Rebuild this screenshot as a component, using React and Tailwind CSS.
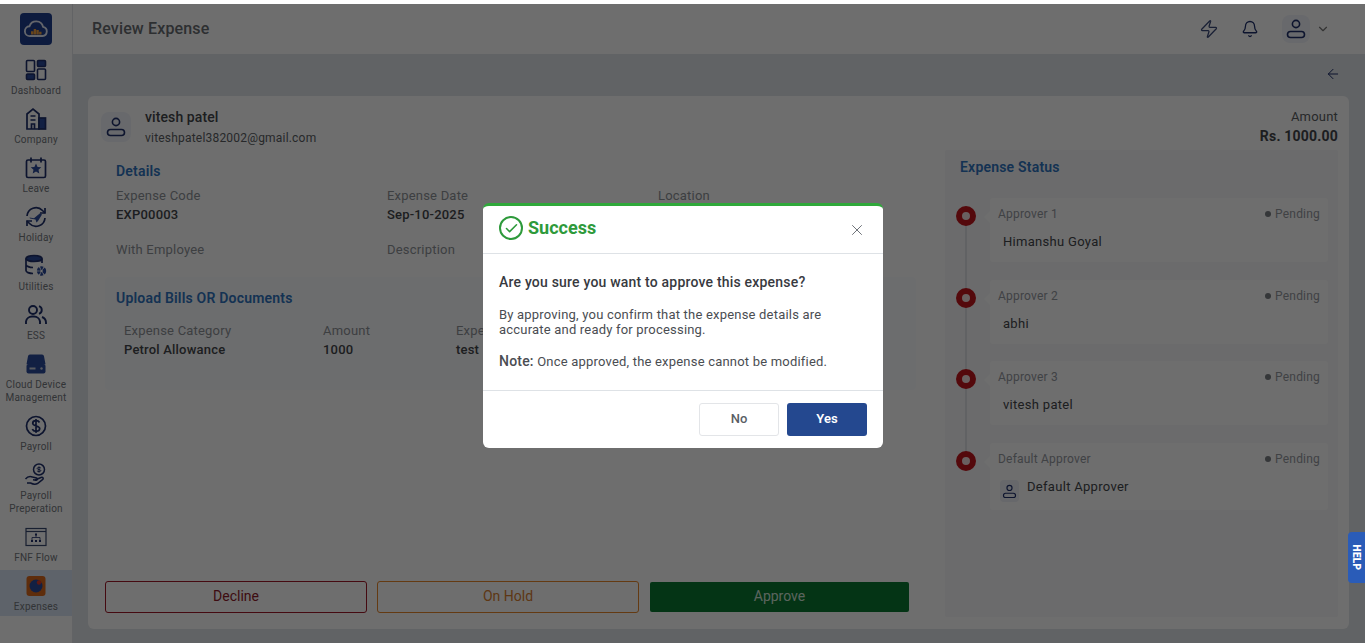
import { ArrowLeft, Bell, ChevronDown, Check, X, Zap } from 'lucide-react';

const font = { fontFamily: 'Roboto, "Liberation Sans", sans-serif' };

// Outline person used in the header, the card top and the default approver row
function Person({ size = 24, color = '#1e2f6b' }) {
  return (
    <svg width={size} height={size} viewBox="0 0 24 24" fill="none" stroke={color} strokeWidth="1.6">
      <circle cx="12" cy="7" r="3.6" />
      <rect x="3.5" y="14.5" width="17" height="6" rx="3" />
    </svg>
  );
}

const c = '#1e2f6b';
const b = '#2b4a9b';

const icons = {
  dashboard: (
    <svg width="24" height="24" viewBox="0 0 24 24" fill="none" stroke={c} strokeWidth="1.6">
      <rect x="2.5" y="2.5" width="8" height="11" rx="1" />
      <rect x="13.5" y="2.5" width="8" height="6" rx="1" fill={b} />
      <rect x="2.5" y="16" width="8" height="5.5" rx="1" fill={b} />
      <rect x="13.5" y="11" width="8" height="10.5" rx="1" />
    </svg>
  ),
  company: (
    <svg width="24" height="24" viewBox="0 0 24 24" fill="none" stroke={c} strokeWidth="1.7">
      <path d="M3 22V7l6-5 6 5v15z" />
      <rect x="15" y="11" width="6.5" height="11" fill={b} />
      <path d="M6.500 9h5M6.500 13h5M7.500 22v-5h3v5" />
    </svg>
  ),
  leave: (
    <svg width="24" height="24" viewBox="0 0 24 24" fill="none" stroke={c} strokeWidth="1.7">
      <rect x="2.5" y="4" width="19" height="17.5" rx="1.5" />
      <path d="M7 1.500v5M17 1.500v5" />
      <path d="M12 7.500l1.600 3.400 3.700.4-2.800 2.500.8 3.700-3.300-1.900-3.300 1.900.8-3.700-2.800-2.500 3.700-.4z" fill={b} stroke="none" />
    </svg>
  ),
  holiday: (
    <svg width="24" height="24" viewBox="0 0 24 24" fill="none" stroke={c} strokeWidth="1.7">
      <path d="M3 11a9 9 0 0 1 15.500-5.500L21 8" />
      <path d="M21 3v5h-5" />
      <path d="M21 13a9 9 0 0 1-15.500 5.500L3 16" />
      <path d="M3 21v-5h5" />
      <path d="M5.500 12.500l4.500.8 6-5 2 1.200-4 6.500-1.500 1.500-1-3-5.500-1z" fill={b} stroke="none" />
    </svg>
  ),
  utilities: (
    <svg width="24" height="24" viewBox="0 0 24 24" fill="none" stroke={c} strokeWidth="1.7">
      <ellipse cx="10" cy="4.500" rx="8" ry="3" fill={b} />
      <path d="M2 4.500v12c0 1.600 3 3 7 3M18 4.500V9M2 10.500c0 1.600 3.500 3 7 3" />
      <circle cx="17.500" cy="17" r="3" stroke={b} strokeWidth="3.400" strokeDasharray="2.400 0.800" />
    </svg>
  ),
  ess: (
    <svg width="24" height="24" viewBox="0 0 24 24" fill="none" stroke={c} strokeWidth="1.900">
      <circle cx="9" cy="7" r="4" />
      <path d="M2 21v-2.500a6 6 0 0 1 6-5h2a6 6 0 0 1 6 5V21" />
      <path d="M15 3.200a4 4 0 0 1 0 7.600M18 14a6 6 0 0 1 4 5.500V21" />
    </svg>
  ),
  device: (
    <svg width="24" height="24" viewBox="0 0 24 24" fill="none">
      <path d="M6 2.500h12a2 2 0 0 1 2 1.700l1.500 8H2.500L4 4.200a2 2 0 0 1 2-1.700z" fill={b} />
      <rect x="2.500" y="12" width="19" height="9.500" rx="2" fill={b} />
      <rect x="5.500" y="15.500" width="6" height="2" fill="#c9cfdd" />
      <circle cx="17.500" cy="16.500" r="1.200" fill="#c9cfdd" />
    </svg>
  ),
  payroll: (
    <svg width="24" height="24" viewBox="0 0 24 24" fill="none" stroke={c} strokeWidth="1.700">
      <circle cx="12" cy="12" r="9.500" />
      <path d="M15.500 8.500c-.6-1.200-2-1.800-3.500-1.800-1.900 0-3.300 1-3.300 2.600 0 3.500 7 1.800 7 5.300 0 1.600-1.500 2.700-3.600 2.700-1.700 0-3.200-.8-3.800-2.100M12 5v14" />
    </svg>
  ),
  prep: (
    <svg width="24" height="24" viewBox="0 0 24 24" fill="none" stroke={c} strokeWidth="1.500">
      <circle cx="15" cy="6.500" r="5.500" />
      <path d="M15 3.500v6M16.800 5c-.8-.9-3.600-.9-3.600.5s3.600.7 3.600 2.100c0 1.300-2.800 1.300-3.600.4" strokeWidth="1" />
      <path d="M1.500 16c2-2.500 4.500-3 7-2l4 1c1.500.5 1 2.500-.5 2.300l-3-.5" />
      <path d="M11 17l6-2.500c2-.7 3 1 1.500 2.200l-5 3.800c-2 1-5 .5-7-.5H3" />
    </svg>
  ),
  fnf: (
    <svg width="24" height="24" viewBox="0 0 24 24" fill="none" stroke={c} strokeWidth="1.200">
      <rect x="2" y="3.500" width="20" height="17" stroke="#39496f" />
      <path d="M2 6.500h20" stroke="#39496f" />
      <path d="M12 10v2.500M8 15v-2.500h8V15" strokeWidth="0.800" />
      <rect x="11" y="8.500" width="2" height="2" fill={c} stroke="none" />
      <rect x="7" y="15" width="2" height="2" fill={c} stroke="none" />
      <rect x="11" y="15" width="2" height="2" fill={c} stroke="none" />
      <rect x="15" y="15" width="2" height="2" fill={c} stroke="none" />
    </svg>
  ),
  expenses: (
    <svg width="24" height="24" viewBox="0 0 24 24">
      <rect x="2.500" y="2" width="19" height="20" rx="3" fill="#d9681d" />
      <circle cx="12" cy="12" r="6.500" fill="#2b4a9b" />
      <circle cx="15" cy="8.500" r="2.200" fill="#d93a2b" />
    </svg>
  ),
};

const navItems = [
  { key: 'dashboard', lines: ['Dashboard'] },
  { key: 'company', lines: ['Company'] },
  { key: 'leave', lines: ['Leave'] },
  { key: 'holiday', lines: ['Holiday'] },
  { key: 'utilities', lines: ['Utilities'] },
  { key: 'ess', lines: ['ESS'] },
  { key: 'device', lines: ['Cloud Device', 'Management'] },
  { key: 'payroll', lines: ['Payroll'] },
  { key: 'prep', lines: ['Payroll', 'Preperation'] },
  { key: 'fnf', lines: ['FNF Flow'] },
  { key: 'expenses', lines: ['Expenses'], active: true },
];

function Sidebar() {
  return (
    <aside className="w-[72px] shrink-0 bg-white flex flex-col items-stretch">
      <div className="h-[50px] flex items-center justify-center">
        <div className="w-8 h-8 rounded-[4px] bg-[#1f3f8f] flex items-center justify-center">
          <svg width="26" height="22" viewBox="0 0 24 20" fill="none">
            <path d="M6.500 16.500a4.500 4.500 0 0 1-.5-9 6.500 6.500 0 0 1 12.500.5 4.300 4.300 0 0 1-.5 8.500z" stroke="#e6ebf7" strokeWidth="1.700" />
            <path d="M8.500 15v-3M11 15v-5M13.500 15v-4M16 15v-2.500" stroke="#f0a040" strokeWidth="2.200" />
          </svg>
        </div>
      </div>
      {navItems.map((item) => (
        <div
          key={item.key}
          className={`flex flex-col items-center pt-[3px] pb-[3px] mb-[3px] ${item.active ? 'bg-[#dbe6f5]' : ''}`}
        >
          <div className="h-[26px] flex items-center">{icons[item.key]}</div>
          <div className="mt-[1px] text-[10px] leading-[13px] tracking-[0.2px] text-[#74787e] text-center">
            {item.lines.map((l) => (
              <div key={l}>{l}</div>
            ))}
          </div>
        </div>
      ))}
    </aside>
  );
}

function Field({ label, value }) {
  return (
    <div>
      <div className="text-[13px] leading-[19px] text-[#8e9298] tracking-[0.2px]">{label}</div>
      {value && <div className="text-[13px] leading-[19px] font-medium text-[#44474b] tracking-[0.2px]">{value}</div>}
    </div>
  );
}

const approvers = [
  { role: 'Approver 1', name: 'Himanshu Goyal' },
  { role: 'Approver 2', name: 'abhi' },
  { role: 'Approver 3', name: 'vitesh patel' },
  { role: 'Default Approver', name: 'Default Approver', icon: true },
];

function ApproverCard({ role, name, icon }) {
  return (
    <div className="relative pl-[45px] mb-[17.7px]">
      {/* timeline dot and arrow */}
      <div className="absolute left-[11px] top-[8px] w-5 h-5 rounded-full border-[6px] border-[#c4161c] bg-[#f3dede]" />
      <div className="absolute left-[39px] top-[13px] w-0 h-0 border-y-[6px] border-y-transparent border-r-[6px] border-r-white" />
      <div className={`bg-white rounded-[3px] px-2 pt-[7px] ${icon ? 'h-[67px]' : 'h-[64px]'}`}>
        <div className="flex justify-between items-center text-[12px] leading-[18px] text-[#95999f] tracking-[0.2px]">
          <span>{role}</span>
          <span className="flex items-center gap-[4px]">
            <span className="w-[6px] h-[6px] rounded-full bg-[#7b7f85]" />
            Pending
          </span>
        </div>
        {icon ? (
          <div className="flex items-start mt-[9px] gap-[8px] pl-[2px]">
            <div className="w-[19px] h-[22px] mt-[3px] rounded bg-[#eef1f8] flex items-center justify-center">
              <Person size={17} />
            </div>
            <span className="text-[13px] leading-[19px] text-[#44474b] tracking-[0.3px]">{name}</span>
          </div>
        ) : (
          <div className="mt-[9px] pl-[5px] text-[13px] leading-[19px] text-[#44474b] tracking-[0.3px]">{name}</div>
        )}
      </div>
    </div>
  );
}

function ReviewCard() {
  return (
    <div className="h-[533px] bg-white rounded-[6px] flex flex-col">
      <div className="h-[54px] shrink-0 flex justify-between pl-[13px] pr-[11px] pt-[12px]">
        <div className="flex">
          <div className="w-[30px] h-[30px] mt-[4px] rounded-[8px] bg-[#f1f4fa] flex items-center justify-center">
            <Person size={24} />
          </div>
          <div className="ml-[14px] -mt-[1px]">
            <div className="text-[14px] leading-[20px] font-medium text-[#44474b] tracking-[0.1px]">vitesh patel</div>
            <div className="text-[12px] leading-[20px] mt-[1px] text-[#5a5e63] tracking-[0.2px]">viteshpatel382002@gmail.com</div>
          </div>
        </div>
        <div className="text-right">
          <div className="text-[13px] leading-[18px] text-[#5a5e63] tracking-[0.2px]">Amount</div>
          <div className="text-[14px] leading-[20px] font-bold text-[#44474b] tracking-[0.2px]">Rs. 1000.00</div>
        </div>
      </div>

      <div className="flex flex-1 min-h-0 pb-[12px] pr-[11px]">
        <div className="w-[857px] shrink-0 flex flex-col pl-[17px] pr-[36px] pb-[4px]">
          <div className="pl-[11px] pt-[13px]">
            <h3 className="text-[14px] leading-[16px] font-semibold text-[#2f74c0] tracking-[0.2px]">Details</h3>
            <div className="grid grid-cols-[271px_271px_1fr] mt-[7px] gap-y-[16px]">
              <Field label="Expense Code" value="EXP00003" />
              <Field label="Expense Date" value="Sep-10-2025" />
              <Field label="Location" />
              <Field label="With Employee" />
              <Field label="Description" />
            </div>
          </div>

          <div className="mt-[18px] -mr-[7px] h-[113px] bg-[#fbfcfe] rounded-[4px] pl-[11px] pt-[13px]">
            <h3 className="text-[14px] leading-[16px] font-semibold text-[#2f74c0] tracking-[0.2px]">Upload Bills OR Documents</h3>
            <div className="grid grid-cols-[199px_133px_1fr] mt-[15px] pl-[8px]">
              <Field label="Expense Category" value="Petrol Allowance" />
              <Field label="Amount" value="1000" />
              <Field label="Expe" value="test" />
            </div>
          </div>

          <div className="mt-auto flex gap-[10px] items-center">
            <button className="w-[262px] h-[32px] pb-[1px] rounded-[3px] border border-[#a01828] text-[14px] text-[#8f1a2a] bg-transparent">Decline</button>
            <button className="w-[262px] h-[32px] pb-[1px] rounded-[3px] border border-[#e8862a] text-[14px] text-[#d98030] bg-transparent">On Hold</button>
            <button className="ml-[1px] w-[259px] h-[30px] pb-[1px] rounded-[2px] bg-[#0a7a32] text-[14px] text-[#d4e8da]">Approve</button>
          </div>
        </div>

        <div className="flex-1 bg-[#f7f8fa] rounded-[2px] pt-[9px] pr-[10px] relative">
          <h3 className="pl-[15px] text-[14px] leading-[16px] font-semibold text-[#2f74c0] tracking-[0.2px]">Expense Status</h3>
          <div className="relative mt-[23px]">
            <div className="absolute left-[20px] top-[18px] w-[2px] h-[250px] bg-[#e2e4e8]" />
            {approvers.map((a) => (
              <ApproverCard key={a.role} {...a} />
            ))}
          </div>
        </div>
      </div>
    </div>
  );
}

function ConfirmModal() {
  return (
    <div className="absolute left-[483px] top-[203px] w-[400px] h-[245px] bg-white rounded-[6px] border-t-[3px] border-[#2fa83a] flex flex-col">
      <div className="h-[48px] shrink-0 border-b border-[#dee2e6] flex items-center justify-between pl-[16px] pr-[17px] pb-[3px]">
        <div className="flex items-center gap-[5px]">
          <div className="w-6 h-6 rounded-full border-2 border-[#2e9a3b] flex items-center justify-center">
            <Check size={15} color="#2e9a3b" strokeWidth={2.5} />
          </div>
          <span className="text-[18px] leading-[24px] font-bold text-[#2e9a3b]">Success</span>
        </div>
        <X size={18} color="#6b6f75" strokeWidth={1.3} className="mt-[3px]" />
      </div>
      <div className="h-[137px] shrink-0 border-b border-[#dee2e6] px-[16px] pt-[19px] text-[#4a4d52]">
        <div className="text-[14px] leading-[18px] font-medium text-[#383a3f] tracking-[0.2px]">Are you sure you want to approve this expense?</div>
        <div className="mt-[16px] text-[13px] leading-[15px] tracking-[0.2px]">
          By approving, you confirm that the expense details are<br />accurate and ready for processing.
        </div>
        <div className="mt-[15px] text-[13px] leading-[18px] tracking-[0.2px]">
          <span className="text-[14px] font-medium">Note:</span> Once approved, the expense cannot be modified.
        </div>
      </div>
      <div className="flex-1 flex justify-end gap-[8px] px-[16px] pt-[12px]">
        <button className="w-[80px] h-[33px] pb-[1px] rounded-[3px] border border-[#e3e5e8] bg-white text-[13px] font-medium text-[#5a5e64]">No</button>
        <button className="w-[80px] h-[33px] pb-[1px] rounded-[3px] bg-[#24488f] text-[13px] font-semibold text-white">Yes</button>
      </div>
    </div>
  );
}

export default function App() {
  return (
    <div className="relative w-[1365px] h-[643px] overflow-hidden bg-white" style={font}>
      <div className="h-[4px]" />
      <div className="flex h-[639px]">
        <Sidebar />
        <div className="flex-1 min-w-0 flex flex-col bg-[#e2e6ea] border-l border-[#e4e6ea]">
          <header className="h-[50px] shrink-0 bg-white flex items-center justify-between pl-[19px] pr-[35px]">
            <h1 className="text-[16px] font-medium text-[#6a6e73] tracking-[0.15px]">Review Expense</h1>
            <div className="flex items-center">
              <Zap size={20} color="#3b4a7a" strokeWidth={1.5} />
              <Bell size={18} color={c} strokeWidth={1.7} className="ml-[23px] -translate-x-[1px]" />
              <div className="ml-[22px] w-[28px] h-[28px] rounded-[8px] bg-[#f1f4fa] flex items-center justify-center">
                <Person size={24} />
              </div>
              <ChevronDown size={14} color="#777" className="ml-[6px]" />
            </div>
          </header>
          <div className="h-[42px] shrink-0 flex items-center justify-end pr-[24px] pb-[2px]">
            <ArrowLeft size={16} color={c} strokeWidth={1.5} />
          </div>
          <div className="pl-[15px] pr-[16px]">
            <ReviewCard />
          </div>
        </div>
      </div>

      {/* backdrop */}
      <div className="absolute left-0 right-0 top-[4px] bottom-0 bg-black/57" />

      {/* help tab stays above the backdrop */}
      <div className="absolute right-0 top-[532px] w-[17px] h-[51px] rounded-l-[4px] bg-[#2a5cb8] flex items-center justify-center">
        <span className="rotate-90 text-[10px] font-black text-white tracking-[0.3px]">HELP</span>
      </div>

      <ConfirmModal />
    </div>
  );
}
